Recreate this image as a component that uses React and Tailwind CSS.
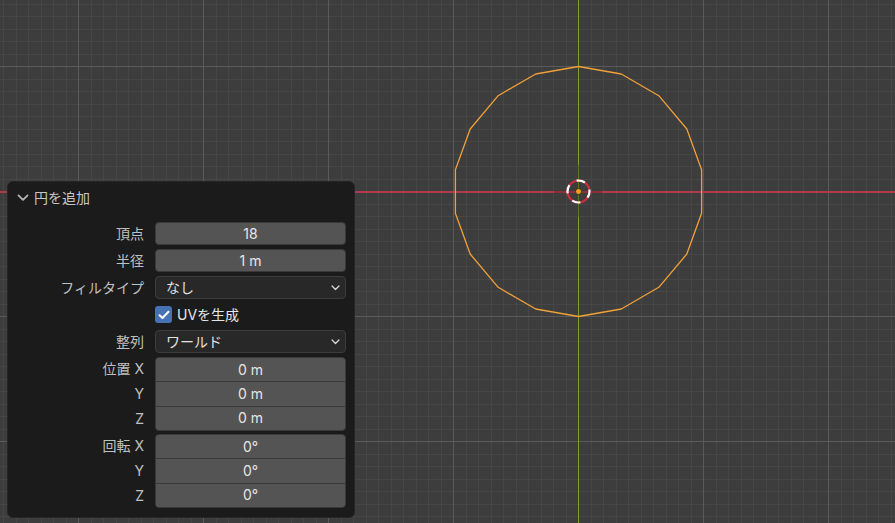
import React from 'react';

const OX = 578;
const OY = 191;
const W = 895;
const H = 523;

function Grid() {
  const minorX = [];
  const majorX = [];
  for (let k = -50; k <= 30; k++) {
    const x = OX + k * 12.5;
    if (x < 0 || x > W) continue;
    (k % 10 === 0 ? majorX : minorX).push(Math.round(x));
  }
  const minorY = [];
  const majorY = [];
  for (let k = -20; k <= 30; k++) {
    const y = OY + k * 12.5;
    if (y < 0 || y > H) continue;
    if (k === 0) continue;
    (k % 10 === 0 ? majorY : minorY).push(Math.round(y));
  }

  // 18 vertices, first one on top
  const pts = [];
  for (let i = 0; i < 18; i++) {
    const a = (Math.PI / 2) + (i * 2 * Math.PI) / 18;
    pts.push(`${(OX + 0.5 + 125 * Math.cos(a)).toFixed(1)},${(OY + 0.5 - 125 * Math.sin(a)).toFixed(1)}`);
  }

  return (
    <svg width={W} height={H} className="absolute inset-0">
      <g shapeRendering="crispEdges">
        {minorX.map((x) => <rect key={'mx' + x} x={x} y={0} width={1} height={H} fill="#464646" />)}
        {minorY.map((y) => <rect key={'my' + y} x={0} y={y} width={W} height={1} fill="#464646" />)}
        {majorX.map((x) => <rect key={'Mx' + x} x={x} y={0} width={1} height={H} fill="#5a5a5a" />)}
        {majorY.map((y) => <rect key={'My' + y} x={0} y={y} width={W} height={1} fill="#5a5a5a" />)}
        {/* axes */}
        <rect x={0} y={OY} width={W} height={1.6} fill="#b03a4a" />
        <rect x={OX - 24} y={OY} width={48} height={1.6} fill="#8a2f3b" />
        <rect x={OX} y={0} width={1.4} height={H} fill="#76a12a" />
        <rect x={OX} y={OY - 26} width={1.4} height={52} fill="#56791f" />
      </g>
      <polygon points={pts.join(' ')} fill="none" stroke="#f0a03a" strokeWidth="1.3" strokeLinejoin="round" />
      {/* 3D cursor */}
      <circle cx={OX + 0.5} cy={OY + 0.5} r="11" fill="none" stroke="#c62f3b" strokeWidth="2.2" />
      <circle cx={OX + 0.5} cy={OY + 0.5} r="11" fill="none" stroke="#ffffff" strokeWidth="2.2" strokeDasharray="8.6 8.6" strokeDashoffset="2" />
      <circle cx={OX + 0.5} cy={OY + 0.5} r="3" fill="#f29d2a" stroke="#222" strokeWidth="0.8" />
    </svg>
  );
}

const Chevron = ({ className, w = 10, h = 7 }) => (
  <svg width={w} height={h} viewBox="0 0 10 7" className={className}>
    <path d="M1 1.2 L5 5.2 L9 1.2" fill="none" stroke="currentColor" strokeWidth="1.5" strokeLinecap="round" strokeLinejoin="round" />
  </svg>
);

const Label = ({ children }) => (
  <div className="w-[140px] shrink-0 pr-[4px] text-right text-[#c0c0c0]">{children}</div>
);

function NumRow({ label, value }) {
  return (
    <div className="flex items-center h-[23px]">
      <Label>{label}</Label>
      <div className="ml-[7px] w-[191px] h-[23px] rounded-[4px] bg-[#545454] border border-[#3a3a3a] flex items-center justify-center text-[#e6e6e6]">
        {value}
      </div>
    </div>
  );
}

function SelectRow({ label, value }) {
  return (
    <div className="flex items-center h-[23px]">
      <Label>{label}</Label>
      <div className="ml-[7px] w-[191px] h-[23px] rounded-[4px] bg-[#282828] border border-[#3c3c3c] flex items-center justify-between pl-[10px] pr-[5px] text-[#e2e2e2]">
        <span>{value}</span>
        <Chevron className="text-[#d8d8d8]" w={9} h={6} />
      </div>
    </div>
  );
}

function Group({ label, rows }) {
  return (
    <div className="flex">
      <div className="w-[140px] shrink-0 flex flex-col">
        {rows.map((r, i) => (
          <div key={i} className={`h-[24px] flex items-center justify-end pr-[4px] text-[#c0c0c0] ${i > 0 ? 'mt-[1px]' : ''}`}>
            {i === 0 ? `${label} ${r[0]}` : r[0]}
          </div>
        ))}
      </div>
      <div className="ml-[7px] w-[191px] rounded-[4px] overflow-hidden border border-[#3a3a3a] bg-[#3a3a3a] flex flex-col gap-[1px]">
        {rows.map((r, i) => (
          <div key={i} className="h-[23.3px] bg-[#545454] flex items-center justify-center text-[#e6e6e6]">{r[1]}</div>
        ))}
      </div>
    </div>
  );
}

export default function App() {
  return (
    <div
      className="relative w-[895px] h-[523px] overflow-hidden bg-[#3d3d3d] text-[14px] leading-none"
      style={{ fontFamily: 'Inter, "Noto Sans CJK JP", sans-serif' }}
    >
      <Grid />

      <div className="absolute left-[7px] top-[181px] w-[348px] h-[337px] rounded-[6px] bg-[#1b1b1b] border border-[#262626] flex flex-col">
        <div className="h-[31px] flex items-center pl-[9px] gap-[5px] text-[#c6c6c6]">
          <Chevron className="text-[#b8b8b8] mt-[1px]" w={12} h={8} />
          <span>円を追加</span>
        </div>
        <div className="flex flex-col gap-[4px] pt-[9px]">
          <NumRow label="頂点" value="18" />
          <NumRow label="半径" value="1 m" />
          <SelectRow label="フィルタイプ" value="なし" />
          <div className="flex items-center h-[23px]">
            <div className="w-[140px] shrink-0" />
            <div className="ml-[7px] flex items-center gap-[5px] text-[#e6e6e6]">
              <div className="w-[17px] h-[17px] rounded-[3px] bg-[#4772b3] flex items-center justify-center">
                <svg width="12" height="10" viewBox="0 0 12 10">
                  <path d="M1.5 5.2 L4.5 8 L10.5 1.8" fill="none" stroke="#ffffff" strokeWidth="2" strokeLinecap="round" strokeLinejoin="round" />
                </svg>
              </div>
              <span>UVを生成</span>
            </div>
          </div>
          <SelectRow label="整列" value="ワールド" />
          <Group label="位置" rows={[['X', '0 m'], ['Y', '0 m'], ['Z', '0 m']]} />
          <div className="mt-[-1px]">
            <Group label="回転" rows={[['X', '0°'], ['Y', '0°'], ['Z', '0°']]} />
          </div>
        </div>
      </div>
    </div>
  );
}
